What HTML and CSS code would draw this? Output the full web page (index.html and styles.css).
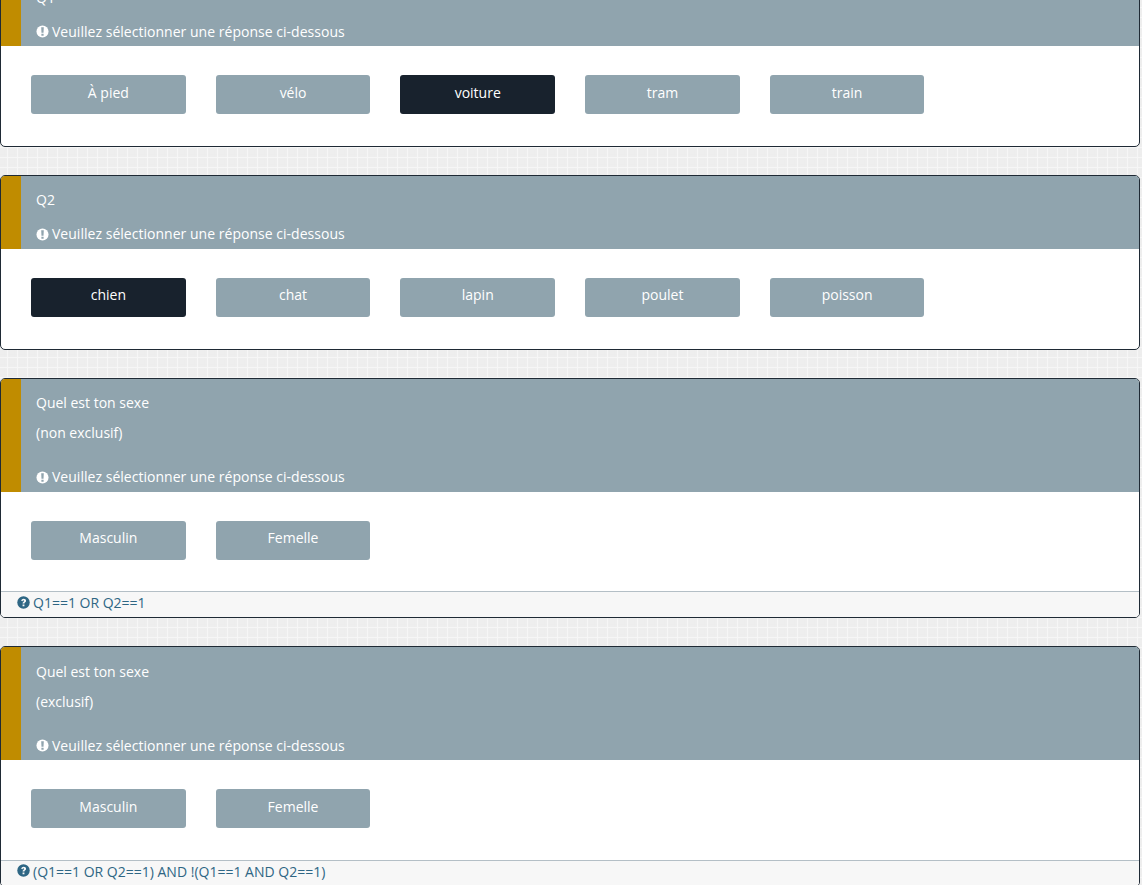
FILE: index.html
```html
<!DOCTYPE html>
<html lang="fr">
<head>
<meta charset="utf-8">
<title>Questions</title>
<link rel="stylesheet" href="styles.css">
</head>
<body>
<svg class="defs" width="0" height="0" aria-hidden="true">
  <symbol id="ex" viewBox="0 0 14 14"><circle cx="7" cy="7" r="6.5" fill="currentColor"/><path d="M5.6 2.5h2.8l-.3 5.8H5.9zM5.8 9.3h2.4v2.2H5.8z" fill="#90a4ae"/></symbol>
  <symbol id="qu" viewBox="0 0 14 14"><circle cx="7" cy="7" r="6.7" fill="currentColor"/><path d="M4.5 5.2C4.8 3.8 5.9 3 7.2 3c1.5 0 2.6.9 2.6 2.2 0 1.8-1.8 1.7-1.8 3H6c0-2.1 1.6-2 1.6-2.9 0-.4-.3-.6-.7-.6-.5 0-.7.3-.9 .9zM6 9.1h2v1.9H6z" fill="#f7f7f7"/></symbol>
</svg>
<main class="page">
  <section class="card">
    <header class="head">
      <p class="q">Q1</p>
      <p class="alert"><svg class="ic"><use href="#ex"/></svg>Veuillez sélectionner une réponse ci-dessous</p>
    </header>
    <div class="opts">
      <button class="opt">À pied</button><button class="opt">vélo</button><button class="opt on">voiture</button><button class="opt">tram</button><button class="opt">train</button>
    </div>
  </section>
  <section class="card">
    <header class="head">
      <p class="q">Q2</p>
      <p class="alert"><svg class="ic"><use href="#ex"/></svg>Veuillez sélectionner une réponse ci-dessous</p>
    </header>
    <div class="opts">
      <button class="opt on">chien</button><button class="opt">chat</button><button class="opt">lapin</button><button class="opt">poulet</button><button class="opt">poisson</button>
    </div>
  </section>
  <section class="card">
    <header class="head">
      <p class="q">Quel est ton sexe</p>
      <p class="q sub">(non exclusif)</p>
      <p class="alert"><svg class="ic"><use href="#ex"/></svg>Veuillez sélectionner une réponse ci-dessous</p>
    </header>
    <div class="opts with-foot">
      <button class="opt">Masculin</button><button class="opt">Femelle</button>
    </div>
    <footer class="foot"><svg class="ic ic-q"><use href="#qu"/></svg>Q1==1 OR Q2==1</footer>
  </section>
  <section class="card">
    <header class="head">
      <p class="q">Quel est ton sexe</p>
      <p class="q sub">(exclusif)</p>
      <p class="alert"><svg class="ic"><use href="#ex"/></svg>Veuillez sélectionner une réponse ci-dessous</p>
    </header>
    <div class="opts with-foot">
      <button class="opt">Masculin</button><button class="opt">Femelle</button>
    </div>
    <footer class="foot"><svg class="ic ic-q"><use href="#qu"/></svg>(Q1==1 OR Q2==1) AND !(Q1==1 AND Q2==1)</footer>
  </section>
</main>
</body>
</html>
```
FILE: styles.css
```css
* { box-sizing: border-box; }
html, body { height: 885px; overflow: hidden; }
body {
  margin: 0;
  font-family: "Open Sans", sans-serif;
  font-size: 14px;
  background-color: #eeeeee;
  background-image:
    linear-gradient(90deg, #f6f6f6 1px, transparent 1px),
    linear-gradient(#f6f6f6 1px, transparent 1px),
    linear-gradient(90deg, #ededed 1px, transparent 1px),
    linear-gradient(#ededed 1px, transparent 1px);
  background-size: 10px 10px, 10px 10px, 5px 5px, 5px 5px;
  background-position: 7px 7px, 7px 7px, 4px 4px, 4px 4px;
}
.defs { position: absolute; }
.page {
  display: flex;
  flex-direction: column;
  gap: 28px;
  margin-top: -27.8px;
  width: 1140px;
}
.card {
  flex: none;
  background: #fff;
  border: 1px solid #1f2a35;
  border-radius: 5px;
  overflow: hidden;
}
.head {
  background: #90a4ae;
  border-left: 20px solid #c08c00;
  color: #fff;
  padding: 14.4px 15px 4.4px;
}
.q { margin: 0; line-height: 20px; height: 30px; }
.sub { height: 44px; }
.head .q:first-child + .alert { margin-top: 4px; }
.alert { margin: 0; line-height: 20px; display: flex; align-items: center; letter-spacing: .025px; }
.ic { width: 13px; height: 13px; margin-right: 3px; flex: none; }
.ic-q { margin-top: 2.7px; }
.opts {
  display: flex;
  gap: 30px;
  padding: 29px 30px 32px;
}
.with-foot { padding-bottom: 31.7px; }
.opt {
  width: 154.7px;
  height: 39px;
  padding: 0 0 3.8px;
  border: 0;
  border-radius: 3px;
  background: #90a4ae;
  color: #fff;
  font: 14px/20px "Open Sans", sans-serif;
}
.opt.on { background: #18222d; }
.foot {
  height: 25.95px;
  padding: 1px 16px 0;
  background: #f7f7f7;
  border-top: 1px solid #b4bfc6;
  color: #2e6684;
  line-height: 20px;
  display: flex;
  align-items: flex-start;
}
```
